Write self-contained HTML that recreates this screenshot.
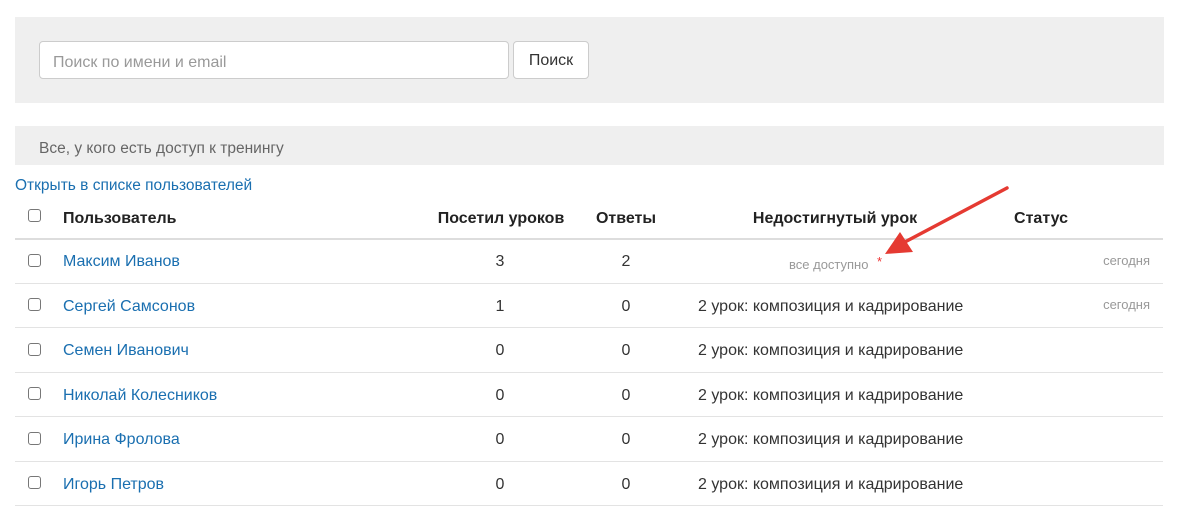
<!DOCTYPE html>
<html><head><meta charset="utf-8"><style>
*{box-sizing:border-box;margin:0;padding:0}
body{width:1199px;height:506px;background:#fff;font-family:"Liberation Sans",sans-serif;color:#333;position:relative;overflow:hidden;font-size:16px}
.a{position:absolute;white-space:nowrap}
.t{margin-top:2px}
.g{position:absolute;background:#efefef}
.cb{position:absolute;left:28px;width:13px;height:13px;border:1.5px solid #777;border-radius:3px;background:#fff}
.ln{position:absolute;left:15px;width:1148px;height:1px;background:#e3e3e3}
.nm{color:#1a6fb0}
.h{font-weight:bold;color:#222}
.c{transform:translateX(-50%)}
.sm{font-size:13px;color:#999}
</style></head><body>
<div class="g" style="left:15px;top:17px;width:1149px;height:86px"></div>
<div class="a" style="left:39px;top:41px;width:470px;height:38px;border:1px solid #ccc;border-radius:4px;background:#fff"></div>
<div class="a t" style="left:53px;top:52px;color:#999">Поиск по имени и email</div>
<div class="a" style="left:513px;top:41px;width:76px;height:38px;border:1px solid #ccc;border-radius:4px;background:#fff;text-align:center;line-height:38px;color:#333">Поиск</div>
<div class="g" style="left:15px;top:126px;width:1149px;height:39px"></div>
<div class="a t" style="left:39px;top:138px;color:#666;font-size:15.5px">Все, у кого есть доступ к тренингу</div>
<div class="a t nm" style="left:15px;top:175px;font-size:15.5px">Открыть в списке пользователей</div>

<div class="cb" style="top:209px"></div>
<div class="a t h" style="left:63px;top:208px">Пользователь</div>
<div class="a t h c" style="left:501px;top:208px">Посетил уроков</div>
<div class="a t h c" style="left:626px;top:208px">Ответы</div>
<div class="a t h c" style="left:835px;top:208px">Недостигнутый урок</div>
<div class="a t h c" style="left:1041px;top:208px">Статус</div>
<div class="ln" style="top:238px;height:2px;background:#ddd"></div>

<div class="cb" style="top:254px"></div><div class="a t nm" style="left:63px;top:251px">Максим Иванов</div>
<div class="a t c" style="left:500px;top:251px">3</div><div class="a t c" style="left:626px;top:251px">2</div>
<div class="a t sm" style="left:789px;top:255px">все доступно</div>
<div class="a t" style="left:877px;top:252px;color:#e33;font-size:13px">*</div>
<div class="a t sm" style="right:49px;top:251px">сегодня</div>
<div class="ln" style="top:283px"></div>

<div class="cb" style="top:298px"></div><div class="a t nm" style="left:63px;top:296px">Сергей Самсонов</div>
<div class="a t c" style="left:500px;top:296px">1</div><div class="a t c" style="left:626px;top:296px">0</div>
<div class="a t" style="left:698px;top:296px">2 урок: композиция и кадрирование</div>
<div class="a t sm" style="right:49px;top:295px">сегодня</div>
<div class="ln" style="top:327px"></div>

<div class="cb" style="top:343px"></div><div class="a t nm" style="left:63px;top:340px">Семен Иванович</div>
<div class="a t c" style="left:500px;top:340px">0</div><div class="a t c" style="left:626px;top:340px">0</div>
<div class="a t" style="left:698px;top:340px">2 урок: композиция и кадрирование</div>
<div class="ln" style="top:372px"></div>

<div class="cb" style="top:387px"></div><div class="a t nm" style="left:63px;top:385px">Николай Колесников</div>
<div class="a t c" style="left:500px;top:385px">0</div><div class="a t c" style="left:626px;top:385px">0</div>
<div class="a t" style="left:698px;top:385px">2 урок: композиция и кадрирование</div>
<div class="ln" style="top:416px"></div>

<div class="cb" style="top:432px"></div><div class="a t nm" style="left:63px;top:429px">Ирина Фролова</div>
<div class="a t c" style="left:500px;top:429px">0</div><div class="a t c" style="left:626px;top:429px">0</div>
<div class="a t" style="left:698px;top:429px">2 урок: композиция и кадрирование</div>
<div class="ln" style="top:461px"></div>

<div class="cb" style="top:476px"></div><div class="a t nm" style="left:63px;top:474px">Игорь Петров</div>
<div class="a t c" style="left:500px;top:474px">0</div><div class="a t c" style="left:626px;top:474px">0</div>
<div class="a t" style="left:698px;top:474px">2 урок: композиция и кадрирование</div>
<div class="ln" style="top:505px"></div>

<svg class="a" style="left:0;top:0" width="1199" height="506">
<line x1="1007" y1="188" x2="903" y2="243" stroke="#e53a32" stroke-width="3.5" stroke-linecap="round"/>
<polygon points="885,254 900,232 913,252" fill="#e53a32"/>
</svg>
</body></html>
